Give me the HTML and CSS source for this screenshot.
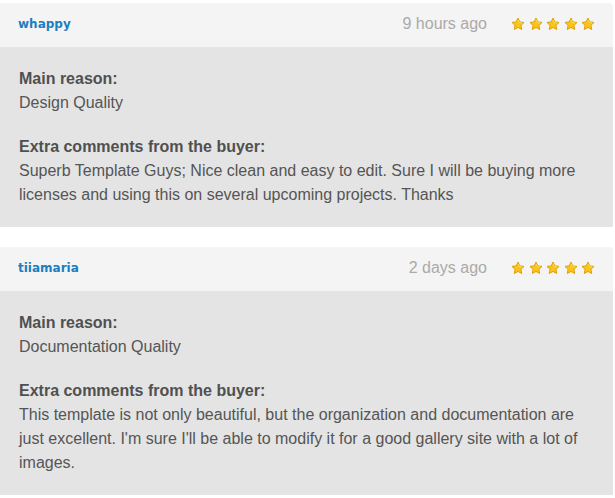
FILE: index.html
```html
<!DOCTYPE html>
<html>
<head>
<meta charset="utf-8">
<link rel="stylesheet" href="styles.css">
</head>
<body>
<svg width="0" height="0" class="defs">
  <defs>
    <symbol id="star" viewBox="0 0 24 24">
      <path d="M12 1.8l3.1 6.6 7.2.9-5.3 5 1.4 7.1L12 17.9l-6.4 3.5 1.4-7.1-5.3-5 7.2-.9z" fill="#fcc515" stroke="#d99a00" stroke-width="1.6" stroke-linejoin="round"/>
      <path d="M12 4.5l2.3 4.9 5 .7" fill="none" stroke="#fde57a" stroke-width="1.2" stroke-linejoin="round"/>
    </symbol>
  </defs>
</svg>
<div class="reviews">
  <div class="review">
    <div class="review-head">
      <a class="user">whappy</a>
      <div class="meta">
        <span class="time">9 hours ago</span>
        <span class="stars">
          <svg class="star"><use href="#star"/></svg><svg class="star"><use href="#star"/></svg><svg class="star"><use href="#star"/></svg><svg class="star"><use href="#star"/></svg><svg class="star"><use href="#star"/></svg>
        </span>
      </div>
    </div>
    <div class="review-body">
      <p><strong>Main reason:</strong><br>Design Quality</p>
      <p><strong>Extra comments from the buyer:</strong><br>Superb Template Guys; Nice clean and easy to edit. Sure I will be buying more licenses and using this on several upcoming projects. Thanks</p>
    </div>
  </div>
  <div class="review">
    <div class="review-head">
      <a class="user">tiiamaria</a>
      <div class="meta">
        <span class="time">2 days ago</span>
        <span class="stars">
          <svg class="star"><use href="#star"/></svg><svg class="star"><use href="#star"/></svg><svg class="star"><use href="#star"/></svg><svg class="star"><use href="#star"/></svg><svg class="star"><use href="#star"/></svg>
        </span>
      </div>
    </div>
    <div class="review-body">
      <p><strong>Main reason:</strong><br>Documentation Quality</p>
      <p><strong>Extra comments from the buyer:</strong><br>This template is not only beautiful, but the organization and documentation are just excellent. I'm sure I'll be able to modify it for a good gallery site with a lot of images.</p>
    </div>
  </div>
</div>
</body>
</html>
```
FILE: styles.css
```css
html, body {
  margin: 0;
  padding: 0;
  background: #ffffff;
}
.defs {
  position: absolute;
  width: 0;
  height: 0;
}
.reviews {
  width: 613px;
  padding-top: 3px;
  display: flex;
  flex-direction: column;
  gap: 20px;
}
.review-head {
  height: 44px;
  background: #f4f4f4;
  border-top-right-radius: 4px;
  display: flex;
  align-items: center;
  justify-content: space-between;
  padding: 0 18px 0 18px;
}
.user {
  font-family: "DejaVu Sans", sans-serif;
  font-weight: bold;
  font-size: 12px;
  color: #1a7fc0;
  margin-top: -3px;
}
.meta {
  display: flex;
  align-items: center;
  gap: 24px;
}
.time {
  font-family: "Liberation Sans", Arial, sans-serif;
  font-size: 16px;
  color: #aaaaaa;
  margin-top: -2px;
}
.stars {
  display: flex;
  gap: 3.5px;
  margin-top: -2px;
}
.star {
  width: 14px;
  height: 14px;
  display: block;
}
.review-body {
  background: #e4e4e4;
  padding: 20px 19px 20px 19px;
  font-family: "Liberation Sans", Arial, sans-serif;
  font-size: 16px;
  line-height: 24px;
  color: #555555;
}
.review-body p {
  margin: 0 0 20px 0;
}
.review-body p:last-child {
  margin-bottom: 0;
}
.review-body strong {
  color: #505050;
}
```
